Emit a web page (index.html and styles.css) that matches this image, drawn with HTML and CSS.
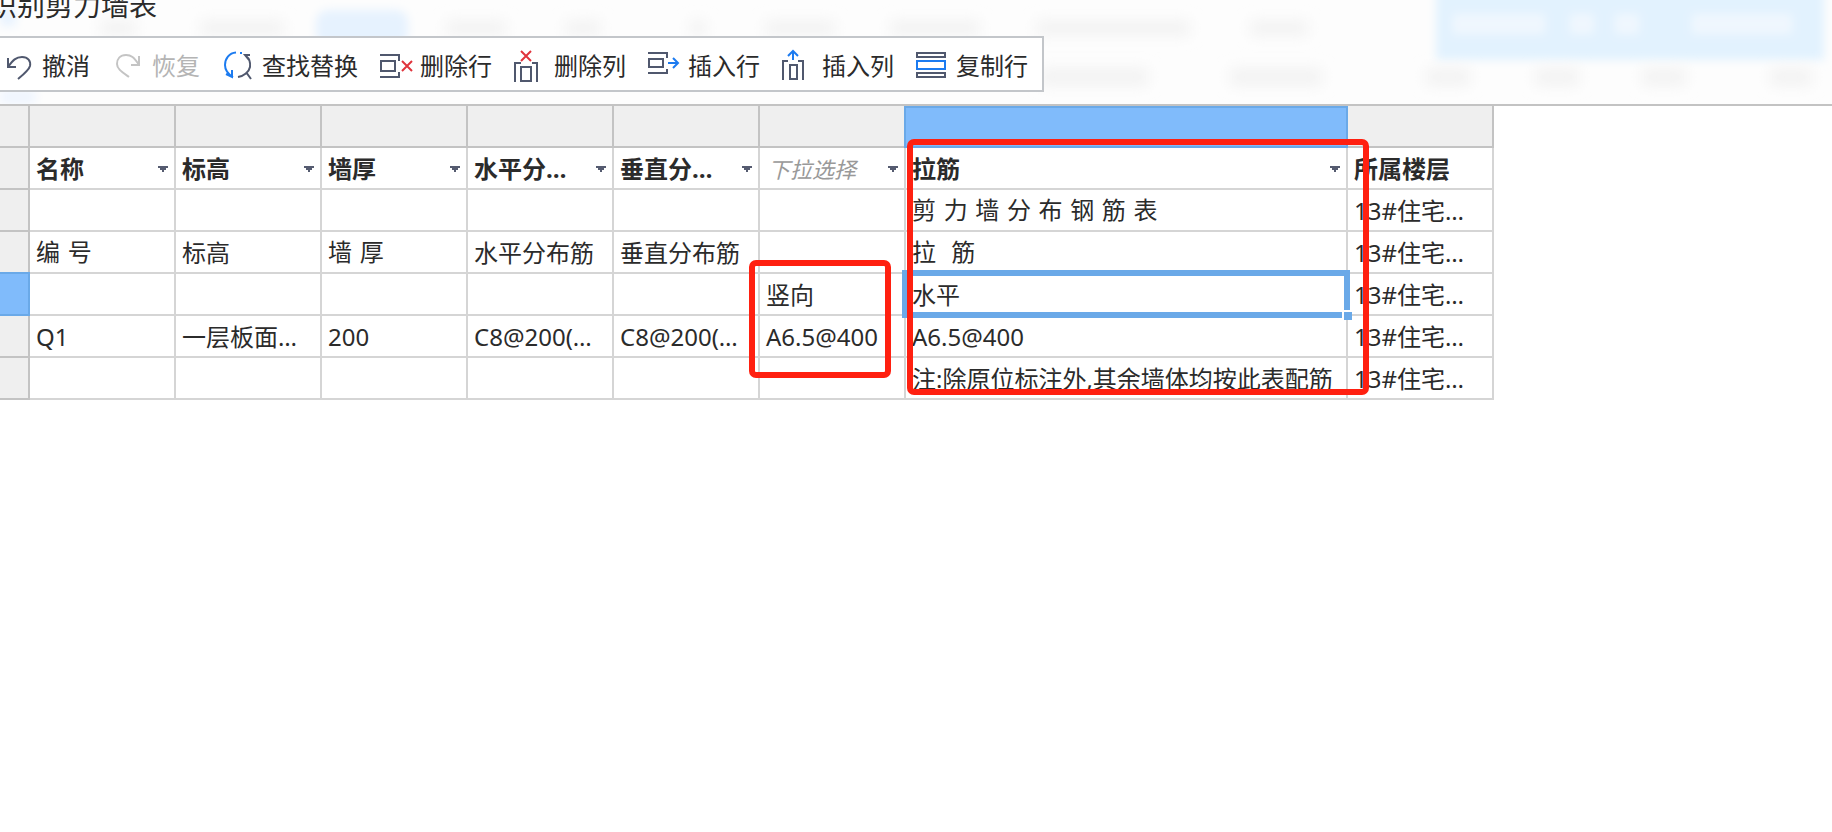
FILE: index.html
```
<!DOCTYPE html>
<html lang="zh-CN">
<head>
<meta charset="utf-8">
<title>识别剪力墙表</title>
<link rel="stylesheet" href="styles.css">
</head>
<body>
<header class="top">
  <svg class="haze" width="1832" height="104" viewBox="0 0 1832 104" aria-hidden="true">
    <defs>
      <filter id="soft" x="-20%" y="-60%" width="140%" height="220%"><feGaussianBlur stdDeviation="5"/></filter>
      <filter id="softer" x="-20%" y="-60%" width="140%" height="220%"><feGaussianBlur stdDeviation="7"/></filter>
    </defs>
    <g filter="url(#soft)">
      <rect x="1436" y="-20" width="388" height="80" fill="#e2f2fe"/>
      <rect x="316" y="10" width="92" height="36" rx="12" fill="#e6f2fe"/>
      <rect x="0" y="8" width="16" height="18" fill="#e8f3fe"/>
      <rect x="0" y="90" width="36" height="14" fill="#eff5fe"/>
      <g fill="#f0f7fe">
        <rect x="1453" y="14" width="92" height="20"/><rect x="1570" y="14" width="24" height="20"/>
        <rect x="1615" y="14" width="24" height="20"/><rect x="1692" y="14" width="100" height="20"/>
      </g>
    </g>
    <g fill="#f3f3f3" filter="url(#softer)">
      <rect x="100" y="20" width="36" height="16"/><rect x="200" y="20" width="84" height="16"/>
      <rect x="446" y="20" width="60" height="16"/><rect x="565" y="20" width="36" height="16"/>
      <rect x="690" y="20" width="16" height="16"/><rect x="765" y="20" width="70" height="16"/>
      <rect x="890" y="20" width="90" height="16"/><rect x="1036" y="20" width="154" height="16"/>
      <rect x="1250" y="20" width="58" height="16"/>
      <rect x="1040" y="68" width="108" height="18"/><rect x="1230" y="68" width="92" height="18"/>
      <rect x="1426" y="68" width="44" height="18"/><rect x="1535" y="68" width="44" height="18"/>
      <rect x="1642" y="68" width="44" height="18"/><rect x="1770" y="68" width="42" height="18"/>
    </g>
  </svg>
  <h1 class="title">识别剪力墙表</h1>
  <div class="toolbar" role="toolbar">
    <button class="tool" type="button">
      <svg class="icon" viewBox="0 0 32 36"><path d="M4 10v9h8M4 19C9 12 12 9 18 9c6 0 9 4 8 9-1 4-6 8-12 13"/></svg>撤消</button>
    <button class="tool" type="button" disabled>
      <svg class="icon" viewBox="0 0 32 36"><path d="M25 8v9h-8M25 17C20 9 17 7 12 7 6 7 3 11 3 16c0 5 5 8 12 13"/></svg>恢复</button>
    <button class="tool" type="button">
      <svg class="icon" viewBox="0 0 32 36"><path class="blue" d="M12 4.500C5 5 1 11 1 17c0 5 3 9 8 12M2 26l6 3v-7M16 5h2"/><path d="M26 7h-5l4 5M22 8c4 3 4.500 7 4 11-1 5-6 9-12 10M22 24l5 7"/></svg>查找替换</button>
    <button class="tool" type="button">
      <svg class="icon" viewBox="0 0 32 36"><path d="M-2 7h19v6M-2 29h19v-5M-1 13h14v10H-1z"/><path class="red" d="M20 13l10 10M30 13L20 23"/></svg>删除行</button>
    <button class="tool" type="button">
      <svg class="icon" viewBox="0 0 32 36"><path d="M5 15h-6v19M16 15h5v19M5 19h10v14H5z"/><path class="red" d="M5 3l10 10M15 3L5 13"/></svg>删除列</button>
    <button class="tool" type="button">
      <svg class="icon" viewBox="0 0 32 36"><path d="M-2 5h19v5M-2 25h19v-4M-1 11h14v8H-1z"/><path class="blue" d="M18 15h9M23 10l5 5-5 5"/></svg>插入行</button>
    <button class="tool" type="button">
      <svg class="icon" viewBox="0 0 32 36"><path d="M4 13h-5v19M14 13h5v19M6 17h7v14H6z"/><path class="blue" d="M9 12V3M4 8l5-5 5 5"/></svg>插入列</button>
    <button class="tool" type="button">
      <svg class="icon" viewBox="0 0 32 36"><path d="M-1 5h28v4H-1zM-1 25h28v4H-1z"/><path class="blue" d="M-1 13h28v8H-1z"/></svg>复制行</button>
  </div>
</header>
<main class="sheet">
  <table class="grid">
    <colgroup>
      <col class="c-row"><col><col><col><col><col><col><col class="c-wide"><col>
    </colgroup>
    <thead>
      <tr class="letters"><th></th><th></th><th></th><th></th><th></th><th></th><th></th><th class="active-col"></th><th></th></tr>
    </thead>
    <tbody>
      <tr class="fields">
        <th></th>
        <td><div class="pick"><select aria-label="第1列"><option>名称</option></select><svg class="caret" viewBox="0 0 10 6"><path d="M0 0h10v2H8v2H6v2H4V4H2V2H0z"/></svg></div></td>
        <td><div class="pick"><select aria-label="第2列"><option>标高</option></select><svg class="caret" viewBox="0 0 10 6"><path d="M0 0h10v2H8v2H6v2H4V4H2V2H0z"/></svg></div></td>
        <td><div class="pick"><select aria-label="第3列"><option>墙厚</option></select><svg class="caret" viewBox="0 0 10 6"><path d="M0 0h10v2H8v2H6v2H4V4H2V2H0z"/></svg></div></td>
        <td><div class="pick"><select aria-label="第4列"><option>水平分…</option></select><svg class="caret" viewBox="0 0 10 6"><path d="M0 0h10v2H8v2H6v2H4V4H2V2H0z"/></svg></div></td>
        <td><div class="pick"><select aria-label="第5列"><option>垂直分…</option></select><svg class="caret" viewBox="0 0 10 6"><path d="M0 0h10v2H8v2H6v2H4V4H2V2H0z"/></svg></div></td>
        <td><div class="pick unset"><select aria-label="第6列"><option>下拉选择</option></select><svg class="caret" viewBox="0 0 10 6"><path d="M0 0h10v2H8v2H6v2H4V4H2V2H0z"/></svg></div></td>
        <td><div class="pick"><select aria-label="第7列"><option>拉筋</option></select><svg class="caret" viewBox="0 0 10 6"><path d="M0 0h10v2H8v2H6v2H4V4H2V2H0z"/></svg></div></td>
        <td>所属楼层</td>
      </tr>
      <tr><th></th><td></td><td></td><td></td><td></td><td></td><td></td><td class="spaced">剪 力 墙 分 布 钢 筋 表</td><td>13#住宅…</td></tr>
      <tr><th></th><td class="spaced">编 号</td><td>标高</td><td class="spaced">墙 厚</td><td>水平分布筋</td><td>垂直分布筋</td><td></td><td class="spaced">拉&nbsp; 筋</td><td>13#住宅…</td></tr>
      <tr><th class="active-row"></th><td></td><td></td><td></td><td></td><td></td><td>竖向</td><td class="selected">水平<span class="frame"></span><span class="handle"></span></td><td>13#住宅…</td></tr>
      <tr><th></th><td>Q1</td><td>一层板面…</td><td>200</td><td>C8@200(…</td><td>C8@200(…</td><td>A6.5@400</td><td>A6.5@400</td><td>13#住宅…</td></tr>
      <tr><th></th><td></td><td></td><td></td><td></td><td></td><td></td><td>注:除原位标注外,其余墙体均按此表配筋</td><td>13#住宅…</td></tr>
    </tbody>
  </table>
  <div class="mark mark-vertical"></div>
  <div class="mark mark-tie"></div>
</main>
</body>
</html>
```
FILE: styles.css
```
* { box-sizing: border-box; }

body {
  margin: 0;
  background: #fff;
  color: #2b2b2b;
  font: 24px/32px "Noto Sans", "Noto Sans CJK SC", sans-serif;
  overflow-x: hidden;
}

.top {
  position: relative;
  padding-bottom: 12px;
  background: #fdfdfd;
  overflow: hidden;
}
.haze { position: absolute; top: 0; left: 0; }

.title {
  position: relative;
  height: 45px;
  margin: -9px 0 0 -11px;
  font-size: 28px;
  line-height: 28px;
  font-weight: 400;
}

.toolbar {
  position: relative;
  display: flex;
  align-items: center;
  gap: 24px;
  width: max-content;
  height: 56px;
  padding: 4px 14px 0 4px;
  border: 2px solid #c3c6ca;
  border-left: 0;
  background: #fff;
}
.tool {
  display: flex;
  align-items: center;
  gap: 6px;
  padding: 0;
  border: 0;
  background: none;
  color: inherit;
  font: inherit;
  white-space: nowrap;
}
.tool:disabled { color: #b4b4b4; }
.icon {
  width: 32px;
  height: 36px;
  overflow: visible;
  fill: none;
  stroke: #50586e;
  stroke-width: 2;
}
.tool:disabled .icon { stroke: #c4c4c4; }
.icon .blue { stroke: #1c7bf0; }
.icon .red { stroke: #e0343c; }

.sheet {
  position: relative;
  border-top: 2px solid #c3c3c3;
}
.grid {
  width: 1494px;
  table-layout: fixed;
  border-collapse: separate;
  border-spacing: 0;
}
.grid col { width: 146px; }
.grid .c-row { width: 30px; }
.grid .c-wide { width: 442px; }

.grid th,
.grid td {
  height: 42px;
  padding: 2px 0 0 6px;
  border-right: 2px solid #d5d5d5;
  border-bottom: 2px solid #d5d5d5;
  text-align: left;
  white-space: nowrap;
}
.grid th {
  padding: 0;
  border-color: #c3c3c3;
  background: #efefef;
}
.fields td { font-weight: 700; }
.grid .spaced { font-family: "DejaVu Sans", "Noto Sans CJK SC", sans-serif; }

.grid .active-col {
  border-color: #6aa9e8;
  background: #80bbfb;
  box-shadow: -2px 0 #6aa9e8, inset 0 2px #6aa9e8;
}
.grid .active-row {
  border-color: #6aa9e8;
  background: #80bbfb;
  box-shadow: 0 -2px #6aa9e8;
}

.pick {
  display: flex;
  align-items: center;
  padding-right: 6px;
}
.pick select {
  flex: 1;
  min-width: 0;
  height: 32px;
  padding: 0;
  border: 0;
  appearance: none;
  background: none;
  color: inherit;
  font: inherit;
}
.unset { padding-left: 2px; }
.unset select {
  color: #999;
  font-size: 22px;
  font-style: italic;
  font-weight: 400;
}
.caret { width: 10px; height: 6px; fill: #555b70; }

.selected { position: relative; }
.frame {
  position: absolute;
  inset: -4px;
  border: 6px solid #6aa9e8;
}
.handle {
  position: absolute;
  right: -6px;
  bottom: -6px;
  width: 8px;
  height: 8px;
  background: #6aa9e8;
  box-shadow: -2px -2px #fff, 0 -2px #fff, -2px 0 #fff;
}

.mark {
  position: absolute;
  border: 6px solid #ff2010;
  border-radius: 7px;
  pointer-events: none;
}
.mark-vertical { left: 749px; top: 154px; width: 142px; height: 118px; }
.mark-tie { left: 907px; top: 33px; width: 462px; height: 256px; }
```
